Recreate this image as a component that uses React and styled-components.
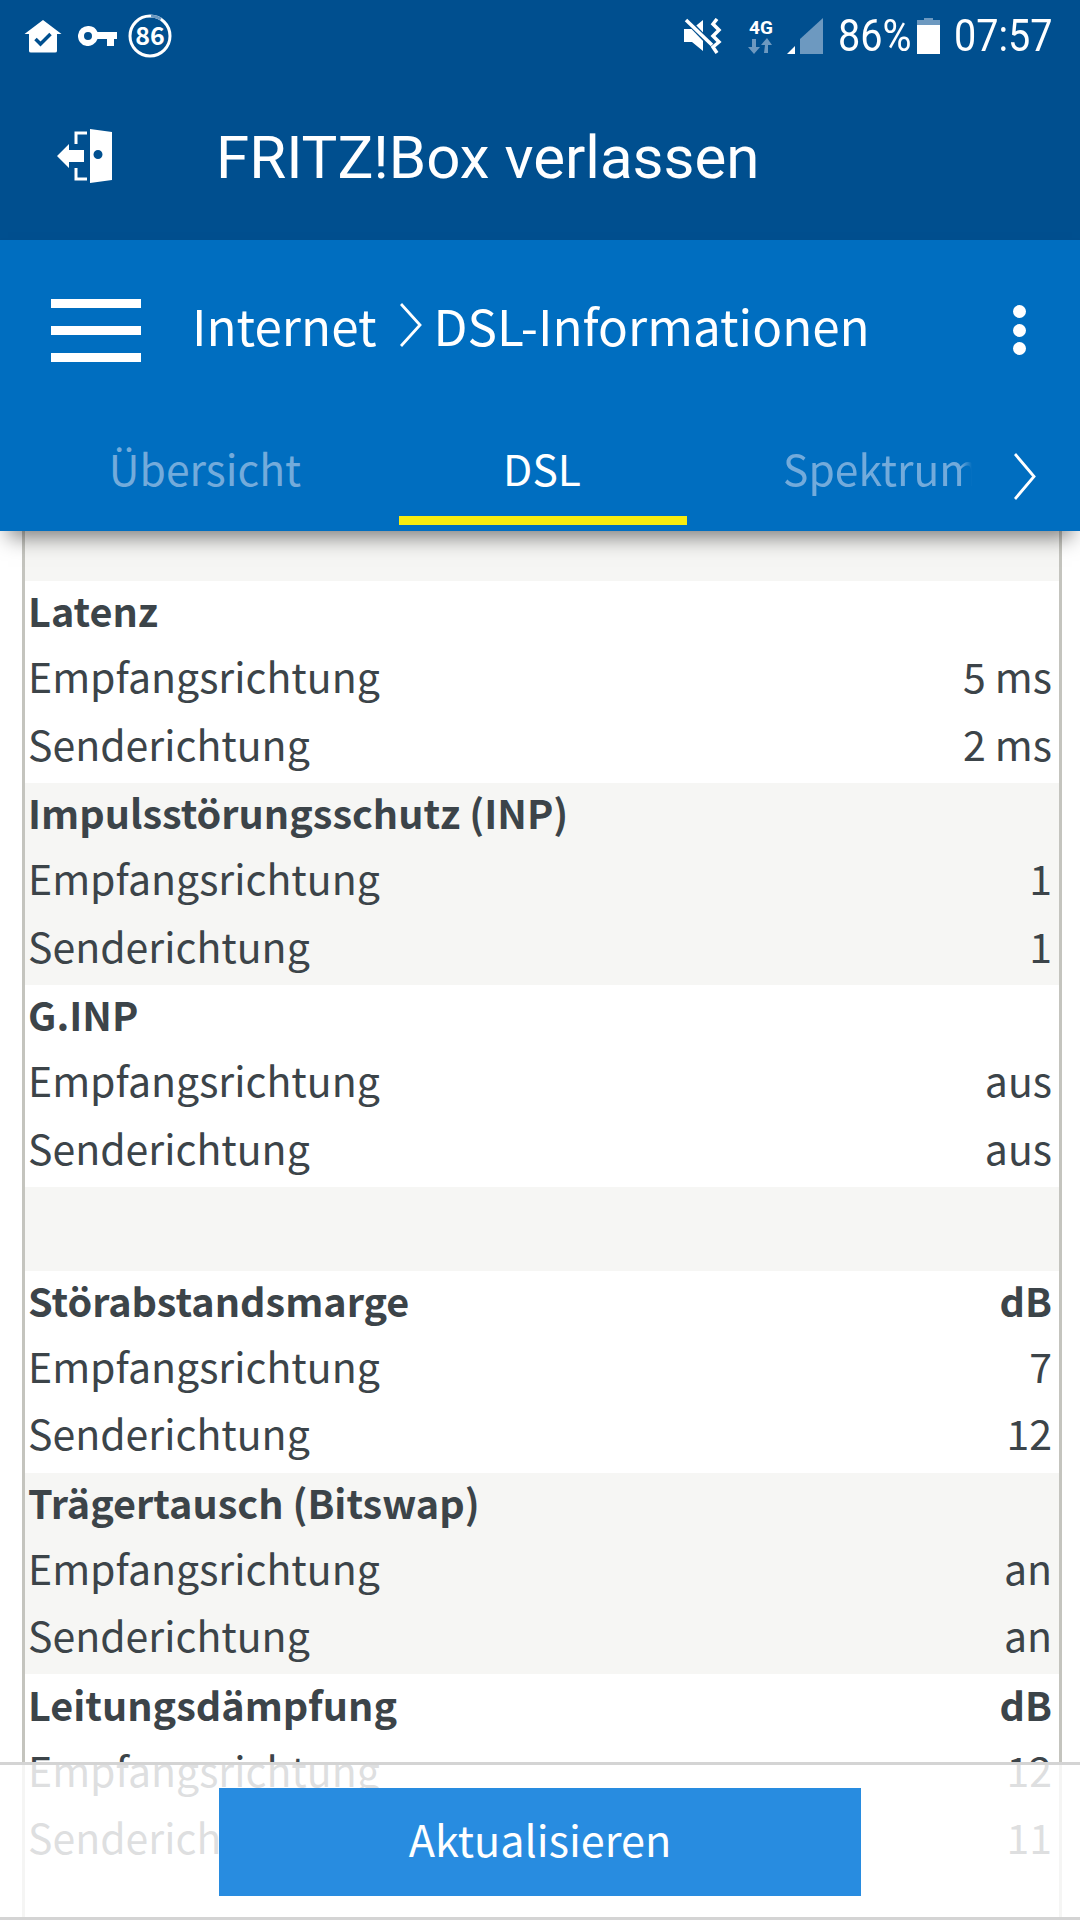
import React from "react";
import styled, { createGlobalStyle } from "styled-components";

const Global = createGlobalStyle`
  html, body { margin: 0; padding: 0; background: #fff; }
  * { box-sizing: border-box; }
`;
const FONT = `"Noto Sans CJK JP", "Noto Sans", sans-serif`;

const Page = styled.div`
  position: relative; width: 1080px; height: 1920px; overflow: hidden;
  background: #fff; font-family: ${FONT}; color: #3c4449;
  display: flex; flex-direction: column;
`;
const TopBlock = styled.div`background: #004f8f; height: 240px; display: flex; flex-direction: column; position: relative; z-index: 3;`;
const StatusBar = styled.div`height: 72px; display: flex; align-items: center; justify-content: space-between; padding: 0 28px 0 24px;`;
const StatusGroup = styled.div`display: flex; align-items: center;`;
const StatusText = styled.span`
  font-family: Roboto, sans-serif; font-size: 44px; line-height: 72px; color: #fff;
  display: inline-block; transform: scaleX(${p => p.$sx}); transform-origin: left center;
  width: ${p => p.$w}px; margin-left: ${p => p.$ml}px; white-space: nowrap;
`;
const Ic = styled.svg`display: block; flex: none; margin-left: ${p => p.$ml || 0}px;`;
const AppBar = styled.div`flex: 1; display: flex; align-items: center; padding: 0 0 0 57px;`;
const AppTitle = styled.div`font-family: Roboto, sans-serif; font-size: 60px; color: #fff; margin: 3px 0 0 104px; line-height: 1; white-space: nowrap;`;
const NavBlock = styled.div`
  background: #006ec0; height: 291px; display: flex; flex-direction: column; position: relative; z-index: 3;
  box-shadow: 0 14px 20px -8px rgba(0,0,0,.5);
`;
const TitleRow = styled.div`height: 174px; display: flex; align-items: center; padding: 0 0 0 51px; flex: none;`;
const Burger = styled.div`width: 90px; height: 63px; display: flex; flex-direction: column; justify-content: space-between; margin-top: 6px;`;
const BurgerBar = styled.div`height: 9px; background: #fff;`;
const Crumb = styled.div`display: flex; align-items: center; color: #fff; font-size: 49.4px; line-height: 1; margin: 0 0 4px 51px; white-space: nowrap;`;
const CrumbLeaf = styled.span`margin-left: 12px;`;
const Dots = styled.div`margin-left: auto; margin-right: 54px; display: flex; flex-direction: column; gap: 5.5px; margin-top: 6px;`;
const Dot = styled.div`width: 13px; height: 13px; border-radius: 50%; background: #fff;`;
const TabRow = styled.div`flex: 1; display: flex; align-items: flex-start;`;
const Tab = styled.div`
  width: 288px; height: 111px; flex: none; text-align: center; white-space: nowrap; overflow: hidden;
  font-size: 42.6px; line-height: 1; padding: 33px 2px 0 0; margin-left: ${p => p.$ml}px;
  color: ${p => p.$on ? "#fff" : "#73abdb"};
  border-bottom: 9px solid ${p => p.$on ? "#f8ec0e" : "transparent"};
`;
const SpektrumTab = styled(Tab)`
  width: 189px; text-align: left; padding-right: 0;
  mask-image: linear-gradient(to right, #000 94%, transparent 100%);
`;
const TabArrow = styled.div`margin: 39px 0 0 42px;`;
const TableWrap = styled.div`
  flex: 1; margin: 0 18px 0 22px; border-left: 3px solid #c4c4be; border-right: 3px solid #c4c4be; overflow: hidden;
`;
const Spacer = styled.div`height: ${p => p.$h}px; background: #f6f6f4;`;
const Section = styled.div`background: ${p => p.$gray ? "#f6f6f4" : "#fff"};`;
const Row = styled.div`
  height: 67.3px; display: flex; justify-content: space-between; align-items: center;
  padding: 0 7px ${p => p.$head ? 9 : 12}px 3px;
  font-size: ${p => p.$head ? 39.6 : 41}px; font-weight: ${p => p.$head ? 700 : 400}; line-height: 1;
`;
const Footer = styled.div`
  position: absolute; left: 0; right: 0; top: 1762px; height: 158px; z-index: 2;
  background: rgba(255,255,255,.83); border-top: 3px solid #d4d4d4; border-bottom: 3px solid #d4d4d4;
  display: flex; justify-content: center; align-items: flex-start; padding-top: 23px;
`;
const Button = styled.div`
  width: 642px; height: 108px; background: #288ce0; color: #fff; font-size: 43.2px; line-height: 1;
  display: flex; align-items: center; justify-content: center; padding-bottom: 6px;
`;

const House = () => (
  <Ic width="38" height="33" viewBox="0 0 38 33">
    <path fill="#fff" d="M19 0 L37.5 14 H33 V31 Q33 32.500 31 32.500 H7 Q5 32.500 5 31 V14 H.5Z" />
    <path fill="none" stroke="#004f8f" strokeWidth="3.500" d="M11.500 19 L16.500 24 L26.500 14" />
  </Ic>
);
const Key = () => (
  <Ic $ml={16} width="39" height="20" viewBox="0 0 39 20">
    <path fill="#fff" fillRule="evenodd" d="M10 0 A10 10 0 0 1 19.500 6 H39 V13 H36 V20 H29 V13 H19.500 A10 10 0 1 1 10 0Z M10 6 A4 4 0 1 0 10 14 A4 4 0 0 0 10 6Z" />
  </Ic>
);
const Circle86 = () => (
  <Ic $ml={11} width="44" height="44" viewBox="0 0 44 44">
    <circle cx="22" cy="22" r="20" fill="none" stroke="#fff" strokeWidth="3" />
    <path d="M23 2 A20 20 0 0 1 33 5" fill="none" stroke="#6d99c0" strokeWidth="3" />
    <text x="22" y="31" textAnchor="middle" fill="#fff" fontFamily="'Noto Sans CJK JP', sans-serif" fontWeight="700" fontSize="25">86</text>
  </Ic>
);
const Mute = () => (
  <Ic width="38" height="36" viewBox="0 0 38 36">
    <path fill="#fff" d="M0 11 H8 L19 2 V33 L8 24 H0Z" />
    <path stroke="#004f8f" strokeWidth="6" d="M1 0 L28 28" />
    <path stroke="#fff" strokeWidth="3.500" d="M2 2 L28 27" />
    <path fill="none" stroke="#fff" strokeWidth="3.500" d="M33 1 L29 6 L35 12 L29 18 L35 24 L29 29 L33 35" />
  </Ic>
);
const FourG = () => (
  <Ic $ml={23} width="32" height="36" viewBox="0 0 32 36">
    <text x="16" y="16" textAnchor="middle" fill="#fff" fontFamily="Roboto, sans-serif" fontWeight="700" fontSize="19">4G</text>
    <path fill="#6d99c0" d="M6 21 h4 v8 h4 l-6 7 l-6 -7 h4z M18 35 h4 v-8 h4 l-5 -7 l-6 7 h4z" transform="translate(1 0)" />
  </Ic>
);
const Signal = () => (
  <Ic $ml={10} width="36" height="36" viewBox="0 0 36 36">
    <path fill="#6d99c0" d="M13 21 L36 0 V36 H13Z" />
    <path fill="#fff" d="M0 36 L8 28 V36Z" />
  </Ic>
);
const Battery = () => (
  <Ic $ml={-4} width="23" height="36" viewBox="0 0 23 36">
    <path fill="#6d99c0" d="M7 0 H16 V2 H23 V7 H0 V2 H7Z" />
    <rect y="7" width="23" height="29" fill="#fff" />
  </Ic>
);
const Exit = () => (
  <Ic width="55" height="55" viewBox="0 0 55 55">
    <path fill="#fff" fillRule="evenodd" d="M33 0 L55 3 V51 L33 54Z M41 21 A4.500 4.500 0 1 0 41 30 A4.500 4.500 0 0 0 41 21Z" />
    <path fill="none" stroke="#fff" strokeWidth="3" d="M30 4 H19 V15 M30 50 H19 V39" />
    <path fill="#fff" d="M0 27 L12 15 V21 H27 V33 H12 V39Z" />
  </Ic>
);
const Chevron = ({ h = 44, ml }) => (
  <Ic $ml={ml} width="22" height={h} viewBox="0 0 22 44" preserveAspectRatio="none">
    <path fill="none" stroke="#fff" strokeWidth="2.800" d="M1 1 L20 22 L1 43" />
  </Ic>
);

const SECTIONS = [
  { title: "Latenz", down: "5 ms", up: "2 ms" },
  { title: "Impulsstörungsschutz (INP)", down: "1", up: "1", gray: true },
  { title: "G.INP", down: "aus", up: "aus" },
  { spacer: 84 },
  { title: "Störabstandsmarge", unit: "dB", down: "7", up: "12" },
  { title: "Trägertausch (Bitswap)", down: "an", up: "an", gray: true },
  { title: "Leitungsdämpfung", unit: "dB", down: "12", up: "11" },
];

export default function App() {
  return (
    <Page>
      <Global />
      <TopBlock>
        <StatusBar>
          <StatusGroup><House /><Key /><Circle86 /></StatusGroup>
          <StatusGroup>
            <Mute /><FourG /><Signal />
            <StatusText $sx={0.9} $w={83} $ml={15}>86%</StatusText>
            <Battery />
            <StatusText $sx={0.9} $w={98} $ml={14}>07:57</StatusText>
          </StatusGroup>
        </StatusBar>
        <AppBar><Exit /><AppTitle>FRITZ!Box verlassen</AppTitle></AppBar>
      </TopBlock>
      <NavBlock>
        <TitleRow>
          <Burger><BurgerBar /><BurgerBar /><BurgerBar /></Burger>
          <Crumb>Internet<Chevron ml={23} /><CrumbLeaf>DSL-Informationen</CrumbLeaf></Crumb>
          <Dots><Dot /><Dot /><Dot /></Dots>
        </TitleRow>
        <TabRow>
          <Tab $ml={62}>Übersicht</Tab>
          <Tab $ml={49} $on>DSL</Tab>
          <SpektrumTab $ml={96}>Spektrum</SpektrumTab>
          <TabArrow><Chevron h={47} /></TabArrow>
        </TabRow>
      </NavBlock>
      <TableWrap>
        <Spacer $h={50} />
        {SECTIONS.map((s, i) => s.spacer ? <Spacer key={i} $h={s.spacer} /> : (
          <Section key={i} $gray={s.gray}>
            <Row $head><span>{s.title}</span><span>{s.unit}</span></Row>
            <Row><span>Empfangsrichtung</span><span>{s.down}</span></Row>
            <Row><span>Senderichtung</span><span>{s.up}</span></Row>
          </Section>
        ))}
      </TableWrap>
      <Footer><Button>Aktualisieren</Button></Footer>
    </Page>
  );
}
